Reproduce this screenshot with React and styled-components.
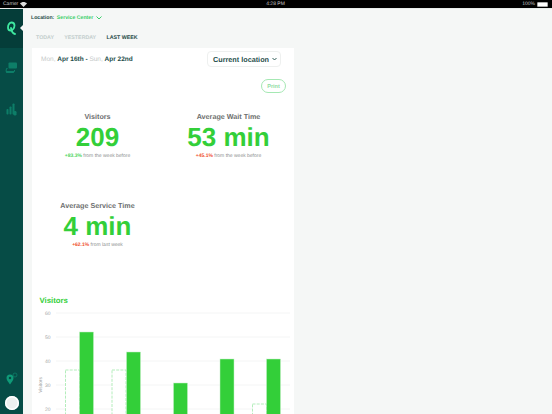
import React from 'react';
import styled, { createGlobalStyle } from 'styled-components';

const GlobalStyle = createGlobalStyle`
  html, body {
    margin: 0;
    padding: 0;
    height: 100%;
    overflow: hidden;
    font-family: "Liberation Sans", Arial, sans-serif;
    text-rendering: geometricPrecision;
  }
`;

const Screen = styled.div`
  width: 552px;
  height: 414px;
  display: flex;
  flex-direction: column;
  overflow: hidden;
  background: #f5f7f6;
`;

const StatusBar = styled.div`
  height: 8px;
  flex: none;
  display: grid;
  grid-template-columns: 1fr auto 1fr;
  align-items: center;
  padding: 0 4px 0 3px;
  background: #000;
  border-bottom: 1px solid #e8eceb;
  color: #c9c9c9;
  font-size: 5px;
  line-height: 8px;
`;

const StatusLeft = styled.div`
  display: flex;
  align-items: center;
  gap: 2px;
`;

const StatusRight = styled.div`
  display: flex;
  align-items: center;
  justify-content: flex-end;
  gap: 2px;
`;

const Battery = styled.span`
  width: 9px;
  height: 3px;
  background: #fff;
  border: 0.5px solid #aaa;
  border-radius: 1px;
`;

const Body = styled.div`
  flex: 1;
  display: flex;
  min-height: 0;
`;

const Sidebar = styled.nav`
  width: 23px;
  flex: none;
  display: flex;
  flex-direction: column;
  align-items: center;
  background: #064c46;
`;

const LogoCell = styled.div`
  position: relative;
  width: 100%;
  height: 39px;
  flex: none;
  display: flex;
  align-items: center;
  justify-content: center;
  background: #053d39;

  &::after {
    content: '';
    position: absolute;
    right: 0;
    top: 16px;
    border: 3px solid transparent;
    border-right-color: #f5f7f6;
    border-left-width: 0;
  }
`;

const NavIcons = styled.div`
  display: flex;
  flex-direction: column;
  align-items: center;
  gap: 29px;
  padding-top: 14px;
`;

const SideBottom = styled.div`
  margin-top: auto;
  display: flex;
  flex-direction: column;
  align-items: center;
  gap: 11px;
  padding-bottom: 4px;
`;

const Avatar = styled.div`
  width: 14px;
  height: 14px;
  border-radius: 50%;
  background: #eef1f0;
  box-shadow: inset 0 0 0 1.5px #fff;
`;

const Main = styled.main`
  flex: 1;
  min-width: 0;
  padding-left: 8px;
`;

const LocationRow = styled.div`
  display: flex;
  align-items: center;
  height: 18px;
  gap: 2.5px;
  font-size: 5.2px;
  font-weight: 700;
  color: #274f4b;
`;

const LocationValue = styled.span`
  color: #3bcf6b;
`;

const Tabs = styled.div`
  display: flex;
  align-items: center;
  height: 21px;
  gap: 10.3px;
  padding-left: 5px;
`;

const Tab = styled.span`
  font-size: 5.3px;
  font-weight: 700;
  color: ${(p) => (p.$active ? '#1f4a47' : '#c3cecd')};
`;

const Card = styled.section`
  width: 262px;
  height: 366px;
  flex: none;
  margin-left: 1px;
  background: #fff;
  overflow: hidden;
`;

const CardHead = styled.div`
  display: flex;
  align-items: center;
  justify-content: space-between;
  height: 22px;
  padding: 0 13px 0 9px;
`;

const DateRange = styled.div`
  font-size: 6.5px;
  font-weight: 700;
  color: #234c49;
`;

const Dim = styled.span`
  color: #c4c9c8;
  font-weight: 400;
`;

const LocationSelect = styled.div`
  display: flex;
  align-items: center;
  gap: 3px;
  height: 14px;
  padding: 0 3px 0 5.5px;
  border: 0.5px solid #eef0ef;
  border-radius: 4px;
  font-size: 7.25px;
  font-weight: 700;
  color: #1f4f4b;
`;

const PrintRow = styled.div`
  display: flex;
  justify-content: flex-end;
  padding: 9px 8px 0 0;
`;

const PrintButton = styled.button`
  width: 25px;
  height: 14px;
  padding: 0;
  border: 0.75px solid #a5e8b3;
  border-radius: 7px;
  background: #fff;
  color: #8fdc9f;
  font-family: inherit;
  font-size: 5.5px;
  font-weight: 700;
`;

const Stats = styled.div`
  display: grid;
  grid-template-columns: 1fr 1fr;
  grid-auto-rows: 88.5px;
  padding-top: 19px;
`;

const Stat = styled.div`
  display: flex;
  flex-direction: column;
  align-items: center;
`;

const StatLabel = styled.div`
  font-size: 7.2px;
  line-height: 10px;
  font-weight: 700;
  color: #6d6f6f;
`;

const StatValue = styled.div`
  font-size: 26px;
  line-height: 30px;
  font-weight: 700;
  color: #33cf39;
`;

const StatNote = styled.div`
  margin-top: 1px;
  font-size: 5px;
  line-height: 7px;
  color: #8d8f8f;
`;

const Delta = styled.span`
  font-weight: 700;
  color: ${(p) => (p.$bad ? '#f0522d' : '#4fd662')};
`;

const ChartTitle = styled.h2`
  margin: 0;
  padding: 6px 0 0 7.5px;
  font-size: 7.8px;
  line-height: 11px;
  font-weight: 700;
  color: #33cf39;
`;

const ChartFrame = styled.svg`
  display: block;
`;

const current = [
  { x: 47.5, top: 332 },
  { x: 94.5, top: 352 },
  { x: 141.5, top: 383 },
  { x: 188, top: 359 },
  { x: 234.5, top: 359 },
];

const previous = [
  { x: 33.5, top: 370 },
  { x: 80, top: 370 },
  { x: 220.5, top: 404 },
];

// chart svg starts at y=306 on the page, bars above are in page coordinates
const OFFSET = 306;
const ticks = [60, 50, 40, 30, 20];

const VisitorsChart = () => (
  <ChartFrame width="262" height="108" viewBox="0 0 262 108" fontFamily="Liberation Sans, Arial, sans-serif">
    {ticks.map((t, i) => {
      const y = 313 - OFFSET + i * 24;
      return (
        <g key={t}>
          <line x1="24" x2="258" y1={y} y2={y} stroke="#f4f5f5" strokeWidth="1" />
          <text x="18.5" y={y + 1.8} fontSize="5" fill="#a3a5a5" textAnchor="end">{t}</text>
        </g>
      );
    })}
    <text transform={`translate(9.5 ${385 - OFFSET}) rotate(-90)`} fontSize="4.8" fill="#a3a5a5" textAnchor="middle">Visitors</text>
    {previous.map((b) => (
      <rect key={b.x} x={b.x} y={b.top - OFFSET} width="14" height={120} fill="#fff" stroke="#b4edbc" strokeWidth="1" strokeDasharray="3 1.2" />
    ))}
    {current.map((b) => (
      <rect key={b.x} x={b.x} y={b.top - OFFSET} width="14" height={120} fill="#33cf39" stroke="#c4f0c8" strokeWidth="0.5" />
    ))}
  </ChartFrame>
);

const App = () => (
  <Screen>
    <GlobalStyle />
    <StatusBar>
      <StatusLeft>
        <span>Carrier</span>
        <svg width="7" height="5" viewBox="0 0 14 10">
          <path d="M7 10 0 3c4-4 10-4 14 0z" fill="#ddd" />
        </svg>
      </StatusLeft>
      <span>4:28 PM</span>
      <StatusRight>
        <span>100%</span>
        <Battery />
      </StatusRight>
    </StatusBar>
    <Body>
      <Sidebar>
        <LogoCell>
          <svg width="9" height="15" viewBox="0 0 18 30" fill="none" stroke="#3fe8a0" strokeWidth="3.6" strokeLinecap="round">
            <path d="M9 3C5 3 2 8 2 13c0 4 2 6 5 6 4 0 8-5 8-10 0-4-2-6-6-6z" />
            <path d="M8 14c1 6 3 11 8 12" />
          </svg>
        </LogoCell>
        <NavIcons>
          <svg width="13" height="12" viewBox="0 0 26 24" fill="none">
            <rect x="7" y="1" width="17" height="12" rx="2" fill="#0d7e68" />
            <path d="M5 13H3l-1 6h17v-3" stroke="#0d7e68" strokeWidth="2" />
            <path d="M3 21h14" stroke="#0d7e68" strokeWidth="2" strokeLinecap="round" />
          </svg>
          <svg width="11" height="13" viewBox="0 0 22 26" fill="#0d7e68">
            <rect x="1" y="12" width="4" height="11" rx="1.5" />
            <rect x="7" y="7" width="4" height="16" rx="1.5" />
            <rect x="13" y="1" width="4" height="22" rx="1.5" />
            <rect x="15" y="16" width="6" height="9" rx="2.5" />
          </svg>
        </NavIcons>
        <SideBottom>
          <svg width="13" height="13" viewBox="0 0 26 26">
            <path d="M10 25C6 19 3 16 3 12a7 7 0 0 1 14 0c0 4-3 7-7 13z" fill="#0f9a78" />
            <circle cx="10" cy="12" r="2.5" fill="#064c46" />
            <circle cx="20" cy="6" r="4" fill="none" stroke="#0d7e68" strokeWidth="1.6" />
          </svg>
          <Avatar />
        </SideBottom>
      </Sidebar>
      <Main>
        <LocationRow>
          <span>Location:</span>
          <LocationValue>Service Center</LocationValue>
          <svg width="6" height="4" viewBox="0 0 12 8" fill="none" stroke="#3bcf6b" strokeWidth="2">
            <path d="M1 1l5 5 5-5" />
          </svg>
        </LocationRow>
        <Tabs>
          <Tab>TODAY</Tab>
          <Tab>YESTERDAY</Tab>
          <Tab $active>LAST WEEK</Tab>
        </Tabs>
        <Card>
          <CardHead>
            <DateRange>
              <Dim>Mon, </Dim>Apr 16th - <Dim>Sun, </Dim>Apr 22nd
            </DateRange>
            <LocationSelect>
              Current location
              <svg width="5" height="4" viewBox="0 0 10 8" fill="none" stroke="#1f4f4b" strokeWidth="1.8">
                <path d="M1 2l4 4 4-4" />
              </svg>
            </LocationSelect>
          </CardHead>
          <PrintRow>
            <PrintButton>Print</PrintButton>
          </PrintRow>
          <Stats>
            <Stat>
              <StatLabel>Visitors</StatLabel>
              <StatValue>209</StatValue>
              <StatNote><Delta>+83.3%</Delta> from the week before</StatNote>
            </Stat>
            <Stat>
              <StatLabel>Average Wait Time</StatLabel>
              <StatValue>53 min</StatValue>
              <StatNote><Delta $bad>+45.1%</Delta> from the week before</StatNote>
            </Stat>
            <Stat>
              <StatLabel>Average Service Time</StatLabel>
              <StatValue>4 min</StatValue>
              <StatNote><Delta $bad>+62.1%</Delta> from last week</StatNote>
            </Stat>
          </Stats>
          <ChartTitle>Visitors</ChartTitle>
          <VisitorsChart />
        </Card>
      </Main>
    </Body>
  </Screen>
);

export default App;
